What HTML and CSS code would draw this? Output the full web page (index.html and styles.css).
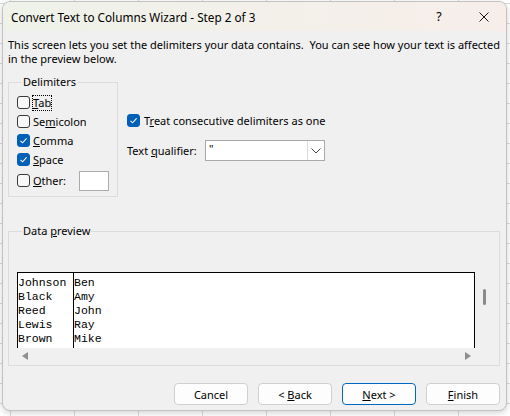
FILE: index.html
```html
<!DOCTYPE html>
<html>
<head>
<meta charset="utf-8">
<title>Convert Text to Columns Wizard</title>
<link rel="stylesheet" href="styles.css">
</head>
<body>
<div class="window">
  <div class="titlebar">
    <span class="title">Convert Text to Columns Wizard - Step 2 of 3</span>
    <span class="help">?</span>
    <span class="close"><svg width="10" height="10" viewBox="0 0 10 10"><path d="M0.5 0.5L9.5 9.5M9.5 0.5L0.5 9.5" stroke="#1a1a1a" stroke-width="1" fill="none"/></svg></span>
  </div>
  <div class="content">
    <p class="intro">This screen lets you set the delimiters your data contains.&nbsp; You can see how your text is affected<br>in the preview below.</p>
    <div class="options">
      <fieldset class="group delims">
        <legend>Delimiters</legend>
        <div class="row"><span class="cb"></span><span class="lbl focus"><u>T</u>ab</span></div>
        <div class="row"><span class="cb"></span><span class="lbl">Se<u>m</u>icolon</span></div>
        <div class="row"><span class="cb on"><svg width="13" height="13" viewBox="0 0 13 13"><path d="M3.5 6.8L5.6 8.8L9.6 4.4" stroke="#fff" stroke-width="1.1" fill="none"/></svg></span><span class="lbl"><u>C</u>omma</span></div>
        <div class="row"><span class="cb on"><svg width="13" height="13" viewBox="0 0 13 13"><path d="M3.5 6.8L5.6 8.8L9.6 4.4" stroke="#fff" stroke-width="1.1" fill="none"/></svg></span><span class="lbl"><u>S</u>pace</span></div>
        <div class="row other"><span class="cb"></span><span class="lbl other-lbl"><u>O</u>ther:</span><span class="textbox"></span></div>
      </fieldset>
      <div class="side">
        <div class="row"><span class="cb on"><svg width="13" height="13" viewBox="0 0 13 13"><path d="M3.5 6.8L5.6 8.8L9.6 4.4" stroke="#fff" stroke-width="1.1" fill="none"/></svg></span><span class="lbl treat">T<u>r</u>eat consecutive delimiters as one</span></div>
        <div class="qual">
          <span class="qual-lbl">Text <u>q</u>ualifier:</span>
          <div class="combo">
            <span class="val">"</span>
            <span class="drop"><svg width="10" height="6" viewBox="0 0 10 6"><path d="M0.5 0.5L5 5L9.5 0.5" stroke="#444" stroke-width="1" fill="none"/></svg></span>
          </div>
        </div>
      </div>
    </div>
    <fieldset class="group preview">
      <legend>Data <u>p</u>review</legend>
      <div class="pv">
        <div class="grid">
          <div class="col c1">Johnson<br>Black<br>Reed<br>Lewis<br>Brown</div>
          <div class="col c2">Ben<br>Amy<br>John<br>Ray<br>Mike</div>
        </div>
        <div class="vscroll"><span class="thumb"></span></div>
      </div>
      <div class="hscroll">
        <svg width="6" height="8" viewBox="0 0 6 8"><path d="M6 0L0 4L6 8Z" fill="#8f8f8f"/></svg>
        <svg width="6" height="8" viewBox="0 0 6 8"><path d="M0 0L6 4L0 8Z" fill="#8f8f8f"/></svg>
      </div>
    </fieldset>
    <div class="buttons">
      <button class="btn">Cancel</button>
      <button class="btn">&lt; <u>B</u>ack</button>
      <button class="btn primary"><u>N</u>ext &gt;</button>
      <button class="btn"><u>F</u>inish</button>
    </div>
  </div>
</div>
</body>
</html>
```
FILE: styles.css
```css
* { box-sizing: border-box; }
html, body { margin: 0; padding: 0; }
body {
  width: 510px;
  height: 416px;
  overflow: hidden;
  padding: 1px 0 0 2px;
  background-color: #ffffff;
  background-image:
    linear-gradient(to right, #d9d9d9 1px, transparent 1px),
    linear-gradient(to bottom, #d9d9d9 1px, transparent 1px);
  background-size: 64px 20px;
  background-position: 10px 3px;
  font-family: "Noto Sans", "Liberation Sans", sans-serif;
  font-size: 11px;
  color: #000;
}
.window {
  width: 505px;
  height: 410px;
  background: #f0f0f0;
  border: 1px solid #c2c2c2;
  border-radius: 8px;
  box-shadow: 0 2px 6px rgba(0,0,0,0.18);
  overflow: hidden;
  display: flex;
  flex-direction: column;
}
.titlebar {
  height: 29px;
  flex: none;
  display: flex;
  align-items: center;
  padding-left: 8px;
  background: linear-gradient(to right, #eef2e9, #f7eeea);
}
.title { font-size: 11.75px; flex: 1; }
.help { width: 44px; text-align: center; font-size: 12.5px; }
.close { width: 45px; display: flex; justify-content: center; align-items: center; }
.close svg { display: block; }

.content {
  flex: 1;
  display: flex;
  flex-direction: column;
  padding-left: 5px;
}
.intro {
  margin: 7px 0 0;
  line-height: 14px;
  white-space: nowrap;
}
.options {
  margin-top: 8px;
  display: flex;
  align-items: flex-start;
}
.group {
  border: 1px solid #dcdcdc;
  margin: 0;
  padding: 0;
  min-width: 0;
}
.group legend {
  padding: 0 1px;
  margin-left: 5px;
  height: 16px;
  line-height: 16px;
}
.delims {
  width: 110px;
  padding: 3px 0 4px 8px;
}
.row {
  height: 19px;
  display: flex;
  align-items: center;
}
.row.other { height: 23px; }
.cb {
  width: 13px;
  height: 13px;
  flex: none;
  border: 1px solid #3a3a3a;
  border-radius: 3px;
  background: #f8f8f8;
  margin-right: 3px;
  display: flex;
}
.cb.on {
  background: #005fb8;
  border-color: #005fb8;
}
.cb svg { display: block; margin: -1px; }
.lbl { line-height: 14px; white-space: nowrap; }
.focus {
  display: inline-block;
  outline: 1px dotted #000;
  outline-offset: 0;
}
.other-lbl { width: 46px; }
.textbox {
  width: 30px;
  height: 20px;
  background: #fff;
  border: 1px solid #ababab;
}
.side {
  margin-left: 9px;
  margin-top: 37px;
}
.side .cb { margin-right: 4px; }
.qual {
  margin-top: 10px;
  display: flex;
  align-items: center;
}
.qual-lbl { width: 78px; white-space: nowrap; }
.combo {
  width: 120px;
  height: 21px;
  background: #fff;
  border: 1px solid #a9a9a9;
  display: flex;
  align-items: center;
}
.val { flex: 1; padding-left: 3px; line-height: 14px; margin-top: -4px; }
.drop {
  width: 17px;
  height: 19px;
  border-left: 1px solid #dcdcdc;
  display: flex;
  align-items: center;
  justify-content: center;
}
.drop svg { display: block; }

.preview {
  margin-top: 26px;
  width: 492px;
  padding: 0 0 1px 8px;
}
.pv {
  margin-top: 33px;
  display: flex;
}
.grid {
  width: 458px;
  height: 76px;
  background: #fff;
  border: 1px solid #000;
  border-bottom: none;
  display: flex;
  font-family: "Liberation Mono", "Courier New", monospace;
  font-size: 11.5px;
  line-height: 14px;
  overflow: hidden;
}
.col { padding-top: 3px; white-space: nowrap; }
.c1 { width: 55px; }
.c2 { flex: 1; border-left: 1px solid #000; }
.vscroll { width: 17px; }
.thumb {
  display: block;
  width: 3px;
  height: 16px;
  margin: 17px 0 0 8px;
  background: #8a8a8a;
  border-radius: 1.5px;
}
.hscroll {
  width: 458px;
  height: 16px;
  display: flex;
  align-items: center;
  justify-content: space-between;
  padding: 0 4px 0 5px;
}
.hscroll svg { display: block; }

.buttons {
  margin-top: 17px;
  display: flex;
  justify-content: flex-end;
  gap: 10px;
  padding-right: 6px;
}
.btn {
  width: 74px;
  height: 22px;
  padding: 0;
  background: #fdfdfd;
  border: 1px solid #d0d0d0;
  border-radius: 4px;
  font-family: "Noto Sans", "Liberation Sans", sans-serif;
  font-size: 11px;
  color: #000;
}
.btn.primary { border-color: #0067c0; }
```
